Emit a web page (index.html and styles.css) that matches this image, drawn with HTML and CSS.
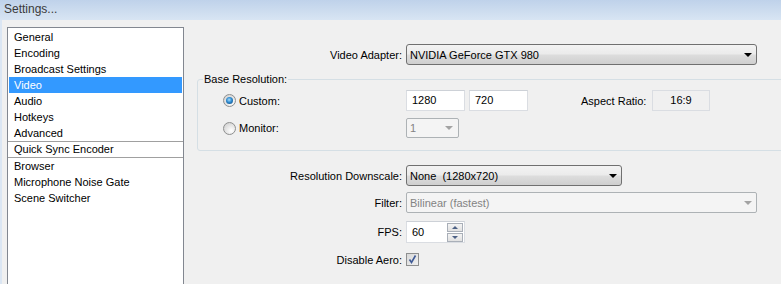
FILE: index.html
```html
<!DOCTYPE html>
<html lang="en">
  <head>
    <meta charset="UTF-8" />
    <meta name="viewport" content="width=device-width, initial-scale=1.0" />
    <title>Settings</title>

    <link rel="stylesheet" href="styles.css">
  </head>

  <body>
    <div class="titlebar">Settings...</div>

    <div class="window">
      <ul class="nav-list">
        <li>General</li>
        <li>Encoding</li>
        <li>Broadcast Settings</li>
        <li class="active">Video</li>
        <li>Audio</li>
        <li>Hotkeys</li>
        <li>Advanced</li>
        <li class="nav-list__sep">Quick Sync Encoder</li>
        <li>Browser</li>
        <li>Microphone Noise Gate</li>
        <li>Scene Switcher</li>
      </ul>

      <div class="panel">
        <div class="form-row">
          <label class="form-row__label">Video Adapter:</label>
          <div class="combo combo--adapter">
            <span>NVIDIA GeForce GTX 980</span>
            <span class="combo__arrow"></span>
          </div>
        </div>

        <fieldset class="group">
          <legend>Base Resolution:</legend>
          <div class="group__row">
            <div class="group__option"><span class="radio radio--checked"></span>Custom:</div>
            <div class="group__controls">
              <div class="textbox">1280</div>
              <div class="textbox">720</div>
              <span class="aspect__label">Aspect Ratio:</span>
              <div class="aspect__value">16:9</div>
            </div>
          </div>
          <div class="group__row group__row--monitor">
            <div class="group__option"><span class="radio"></span>Monitor:</div>
            <div class="group__controls">
              <div class="combo combo--disabled combo--monitor">
                <span>1</span>
                <span class="combo__arrow"></span>
              </div>
            </div>
          </div>
        </fieldset>

        <div class="form-row form-row--downscale">
          <label class="form-row__label">Resolution Downscale:</label>
          <div class="combo combo--downscale">
            <span>None&nbsp; (1280x720)</span>
            <span class="combo__arrow"></span>
          </div>
        </div>

        <div class="form-row form-row--filter">
          <label class="form-row__label">Filter:</label>
          <div class="combo combo--disabled combo--adapter">
            <span>Bilinear (fastest)</span>
            <span class="combo__arrow"></span>
          </div>
        </div>

        <div class="form-row form-row--fps">
          <label class="form-row__label">FPS:</label>
          <div class="spinbox">
            <span>60</span>
            <div class="spinbox__buttons">
              <span class="spinbox__btn"><i class="up"></i></span>
              <span class="spinbox__btn"><i class="down"></i></span>
            </div>
          </div>
        </div>

        <div class="form-row form-row--aero">
          <label class="form-row__label">Disable Aero:</label>
          <span class="checkbox">
            <svg width="11" height="11" viewBox="0 0 11 11">
              <path d="M2.5 5.5 L4.5 8.5 L8.5 1.5" fill="none" stroke="#3f5a96" stroke-width="1.6" />
            </svg>
          </span>
        </div>
      </div>
    </div>
  </body>
</html>
```

FILE: styles.css
```css
* {
  box-sizing: border-box;
}

body {
  margin: 0;
  background-color: #f0f0f0;
  font-family: "Liberation Sans", Arial, sans-serif;
  font-size: 11px;
  color: #000;
  overflow: hidden;
}

.titlebar {
  height: 20px;
  line-height: 19px;
  padding-left: 4px;
  font-size: 12px;
  color: #3a3a3a;
  background: linear-gradient(#bfd2ea, #d8e5f3);
}

.window {
  display: flex;
  padding-top: 7px;
  padding-left: 5px;
  border-left: 2px solid #dbe6f3;
  height: 264px;
}

/* left list */
.nav-list {
  list-style: none;
  margin: 0;
  padding: 1px 0 0;
  width: 177px;
  height: 270px;
  background-color: #fff;
  border: 1px solid #828790;
  flex-shrink: 0;
}

.nav-list li {
  height: 16px;
  line-height: 16px;
  margin: 0 1px;
  padding-left: 5px;
  white-space: nowrap;
}

.nav-list li.active {
  background-color: #3399ff;
  color: #fff;
}

.nav-list .nav-list__sep {
  margin: 0;
  padding-left: 6px;
  height: 17px;
  line-height: 15px;
  border-top: 1px solid #a0a0a0;
  border-bottom: 1px solid #a0a0a0;
}

/* right side */
.panel {
  flex: 1;
  padding-top: 17px;
  min-width: 0;
}

.form-row {
  display: grid;
  grid-template-columns: 218px auto;
  column-gap: 4px;
  align-items: center;
  justify-items: start;
}

.form-row__label {
  justify-self: end;
  white-space: nowrap;
}

.form-row--downscale {
  margin-top: 14px;
}

.form-row--filter {
  margin-top: 6px;
}

.form-row--fps {
  margin-top: 8px;
}

.form-row--aero {
  margin-top: 10px;
}

/* combo boxes */
.combo {
  height: 21px;
  display: flex;
  align-items: center;
  justify-content: space-between;
  padding: 0 4px 0 3px;
  border: 1px solid #707070;
  border-radius: 3px;
  background: linear-gradient(#f3f3f3 0%, #ebebeb 48%, #dddddd 52%, #cfcfcf 100%);
  white-space: nowrap;
}

.combo__arrow {
  width: 0;
  height: 0;
  border-left: 4px solid transparent;
  border-right: 4px solid transparent;
  border-top: 4px solid #000;
}

.combo--adapter {
  width: 351px;
}

.combo--downscale {
  width: 216px;
}

.combo--monitor {
  width: 53px;
  height: 20px;
  padding-right: 5px;
}

.combo--disabled {
  border-color: #adb2b5;
  border-radius: 2px;
  background: #f4f4f4;
  color: #838383;
}

.combo--disabled .combo__arrow {
  border-top-color: #a3a3a3;
}

/* group box */
.group {
  margin: 7px -20px 0 13px;
  padding: 0 0 12px;
  border: 1px solid #d5dfe5;
  border-radius: 3px;
  min-width: 0;
}

.group legend {
  margin-left: 5px;
  padding: 0 1px;
  line-height: 15px;
}

.group__row {
  display: grid;
  grid-template-columns: 208px auto;
  align-items: center;
  margin-top: 3px;
}

.group__row--monitor {
  margin-top: 7px;
}

.group__option {
  display: flex;
  align-items: center;
  padding-left: 25px;
}

.group__controls {
  display: flex;
  align-items: center;
}

.radio {
  width: 13px;
  height: 13px;
  margin-right: 3px;
  border-radius: 50%;
  border: 1px solid #8e8f8f;
  background: radial-gradient(circle at 65% 70%, #ffffff, #dadada 70%, #c8c8c8);
  display: flex;
  align-items: center;
  justify-content: center;
}

.radio--checked::after {
  content: "";
  width: 7px;
  height: 7px;
  border-radius: 50%;
  background: radial-gradient(circle at 45% 40%, #a9ddfb 0%, #2d8ad0 45%, #0b3d6c 100%);
}

.textbox {
  width: 59px;
  height: 21px;
  line-height: 19px;
  padding-left: 5px;
  background-color: #fff;
  border: 1px solid #dadde2;
  border-top-color: #cdd1d7;
}

.textbox + .textbox {
  margin-left: 4px;
}

.aspect__label {
  width: 71px;
  margin-left: 53px;
  white-space: nowrap;
}

.aspect__value {
  width: 58px;
  height: 21px;
  line-height: 19px;
  text-align: center;
  border: 1px solid #dadde2;
  background-color: #f0f0f0;
}

/* spin box */
.spinbox {
  width: 59px;
  height: 22px;
  display: flex;
  align-items: flex-start;
  justify-content: space-between;
  padding: 0 1px 0 5px;
  line-height: 20px;
  background-color: #fff;
  border: 1px solid #dadde2;
  border-top-color: #cdd1d7;
}

.spinbox__buttons {
  display: flex;
  flex-direction: column;
  padding-top: 1px;
}

.spinbox__btn {
  width: 16px;
  height: 9px;
  display: flex;
  align-items: center;
  justify-content: center;
  border: 1px solid #a9afb8;
  background: linear-gradient(#f4f4f4, #e1e1e1);
}

.spinbox__btn + .spinbox__btn {
  margin-top: 1px;
}

.spinbox__btn i {
  width: 0;
  height: 0;
  border-left: 3px solid transparent;
  border-right: 3px solid transparent;
}

.spinbox__btn i.up {
  border-bottom: 3px solid #4d6185;
}

.spinbox__btn i.down {
  border-top: 3px solid #4d6185;
}

/* check box */
.checkbox {
  width: 13px;
  height: 13px;
  display: flex;
  align-items: center;
  justify-content: center;
  border: 1px solid #8e8f8f;
  background: linear-gradient(135deg, #d8d8d8, #f0f0f0);
}
```
